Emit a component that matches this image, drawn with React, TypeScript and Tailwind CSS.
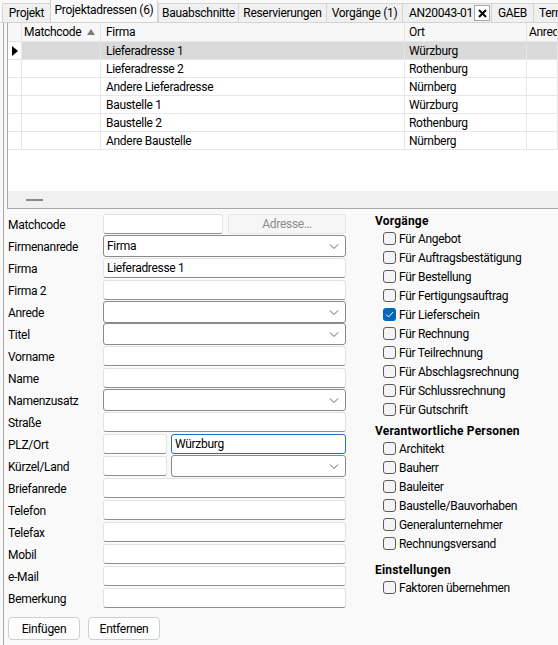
import React from 'react';

type Tab = { label: string; w: string; active?: boolean; closable?: boolean };

const tabs: Tab[] = [
  { label: 'Projekt', w: 'w-[48px]' },
  { label: 'Projektadressen (6)', w: 'w-[108px]', active: true },
  { label: 'Bauabschnitte', w: 'w-[80px]' },
  { label: 'Reservierungen', w: 'w-[88px]' },
  { label: 'Vorgänge (1)', w: 'w-[76px]' },
  { label: 'AN20043-01', w: 'w-[89px]', closable: true },
  { label: 'GAEB', w: 'w-[42px]' },
  { label: 'Termine', w: 'w-[60px]' },
];

const rows = [
  { firma: 'Lieferadresse 1', ort: 'Würzburg' },
  { firma: 'Lieferadresse 2', ort: 'Rothenburg' },
  { firma: 'Andere Lieferadresse', ort: 'Nürnberg' },
  { firma: 'Baustelle 1', ort: 'Würzburg' },
  { firma: 'Baustelle 2', ort: 'Rothenburg' },
  { firma: 'Andere Baustelle', ort: 'Nürnberg' },
];

const vorgaenge = [
  'Für Angebot',
  'Für Auftragsbestätigung',
  'Für Bestellung',
  'Für Fertigungsauftrag',
  'Für Lieferschein',
  'Für Rechnung',
  'Für Teilrechnung',
  'Für Abschlagsrechnung',
  'Für Schlussrechnung',
  'Für Gutschrift',
];

const personen = [
  'Architekt',
  'Bauherr',
  'Bauleiter',
  'Baustelle/Bauvorhaben',
  'Generalunternehmer',
  'Rechnungsversand',
];

function TabBar() {
  return (
    <div className="flex h-[23px] items-end overflow-hidden border-b border-[#d4d4d4] pl-[2px] whitespace-nowrap">
      {tabs.map((t, i) => {
        if (t.active) {
          return (
            <div
              key={t.label}
              className={`${t.w} h-[23px] flex shrink-0 items-center justify-center border-x border-t border-[#d4d4d4] bg-[#f9f9f9] pb-[2px]`}
            >
              {t.label}
            </div>
          );
        }
        if (t.closable) {
          return (
            <div
              key={t.label}
              className={`${t.w} h-[19px] flex shrink-0 items-center border-l border-t border-[#d4d4d4] bg-[#f0f0f0] pl-[6px]`}
            >
              <span>{t.label}</span>
              <span className="ml-auto mr-[1px] flex h-[16px] w-[16px] shrink-0 items-center justify-center border border-[#a8a8a8] bg-white">
                <svg width="9" height="9" viewBox="0 0 9 9">
                  <path d="M1 1 L8 8 M8 1 L1 8" stroke="#000" strokeWidth="2" />
                </svg>
              </span>
            </div>
          );
        }
        const last = i === tabs.length - 1;
        return (
          <div
            key={t.label}
            className={`${t.w} h-[19px] flex shrink-0 items-center border-l border-t border-[#d4d4d4] bg-[#f0f0f0] ${
              last ? 'justify-start pl-[5px]' : 'justify-center'
            }`}
          >
            {t.label}
          </div>
        );
      })}
    </div>
  );
}

function Grid() {
  const cell = 'border-r border-b border-[#e6e6e6] flex items-center';
  return (
    <div className="ml-[3px] h-[186px] flex flex-col border-l border-b border-[#a8a8a8] bg-white">
      {/* Kopfzeile */}
      <div className="grid h-[19px] grid-cols-[14px_79px_304px_122px_1fr] bg-[#f7f7f7]">
        <div className={cell} />
        <div className={`${cell} justify-between pl-[2px] pr-[5px]`}>
          <span>Matchcode</span>
          <svg width="8" height="6" viewBox="0 0 8 6">
            <path d="M4 0 L8 6 L0 6 Z" fill="#7a7a7a" />
          </svg>
        </div>
        <div className={`${cell} pl-[5px]`}>Firma</div>
        <div className={`${cell} pl-[4px]`}>Ort</div>
        <div className={`${cell} pl-[2px] overflow-hidden whitespace-nowrap`}>Anrede</div>
      </div>
      {rows.map((r, i) => {
        const sel = i === 0 ? 'bg-[#dadada]' : '';
        return (
          <div key={r.firma} className="grid h-[18px] grid-cols-[14px_79px_304px_122px_1fr]">
            <div className={`${cell} pl-[4px]`}>
              {i === 0 && (
                <svg width="6" height="10" viewBox="0 0 6 10">
                  <path d="M0 0 L6 5 L0 10 Z" fill="#000" />
                </svg>
              )}
            </div>
            <div className={`${cell} ${sel}`} />
            <div className={`${cell} ${sel} pl-[5px]`}>{r.firma}</div>
            <div className={`${cell} ${sel} pl-[4px]`}>{r.ort}</div>
            <div className={`${cell} ${sel}`} />
          </div>
        );
      })}
      <div className="flex-1" />
      <div className="h-[17px] flex items-center bg-[#f0f0f0] pl-[18px]">
        <div className="h-[2px] w-[17px] bg-[#8a8a8a]" />
      </div>
    </div>
  );
}

function Chevron() {
  return (
    <svg width="10" height="6" viewBox="0 0 10 6" className="absolute right-[6px] top-[8px]">
      <path d="M1 0.5 L5 4.5 L9 0.5" stroke="#5f5f5f" strokeWidth="1" fill="none" />
    </svg>
  );
}

function TextBox({ value, w = 'w-[243px]', focused }: { value?: string; w?: string; focused?: boolean }) {
  return (
    <div
      className={`${w} h-[20px] flex items-center rounded-[3px] bg-white pl-[3px] border ${
        focused ? 'border-[#1a6fc9]' : 'border-[#e2e2e2] border-b-[#8f8f8f]'
      }`}
    >
      {value}
    </div>
  );
}

function Combo({ value, w = 'w-[243px]' }: { value?: string; w?: string }) {
  return (
    <div className={`${w} relative h-[22px] flex items-center rounded-[3px] border border-[#8a8a8a] bg-white pl-[3px]`}>
      {value}
      <Chevron />
    </div>
  );
}

function Row({ label, children }: { label: string; children?: React.ReactNode }) {
  return (
    <div className="flex h-[22px] items-center">
      <div className="w-[95px] pt-[1px]">{label}</div>
      <div className="flex items-center gap-[4px]">{children}</div>
    </div>
  );
}

function Check({ label, checked }: { label: string; checked?: boolean }) {
  return (
    <div className="flex h-[19px] items-center pl-[8px]">
      {checked ? (
        <div className="flex h-[13px] w-[13px] items-center justify-center rounded-[3px] bg-[#0067c0]">
          <svg width="9" height="7" viewBox="0 0 9 7">
            <path d="M1 3.5 L3.5 6 L8 1" stroke="#fff" strokeWidth="1" fill="none" />
          </svg>
        </div>
      ) : (
        <div className="h-[13px] w-[13px] rounded-[3px] border border-[#5c5c5c] bg-[#f4f4f4]" />
      )}
      <span className="ml-[3px]">{label}</span>
    </div>
  );
}

function Heading({ children, className = '' }: { children: React.ReactNode; className?: string }) {
  return <div className={`h-[16px] flex items-center font-bold tracking-[0.2px] ${className}`}>{children}</div>;
}

export default function App() {
  return (
    <div className="w-[558px] h-[645px] overflow-hidden bg-[#f9f9f9] text-[12px] leading-none tracking-[-0.3px] text-black font-['Segoe_UI','Roboto',sans-serif]">
      <TabBar />
      <div className="ml-[3px] h-[622px] border-l border-[#a8a8a8]">
        <Grid />

        <div className="flex pt-[4px]">
          {/* Adressfelder */}
          <div className="pl-[4px]">
            <Row label="Matchcode">
              <TextBox w="w-[120px]" />
              <div className="ml-[1px] w-[118px] h-[20px] flex items-center justify-center rounded-[3px] border border-[#e6e6e6] bg-[#f6f6f6] text-[#8c8c8c]">
                Adresse…
              </div>
            </Row>
            <Row label="Firmenanrede">
              <Combo value="Firma" />
            </Row>
            <Row label="Firma">
              <TextBox value="Lieferadresse 1" />
            </Row>
            <Row label="Firma 2">
              <TextBox />
            </Row>
            <Row label="Anrede">
              <Combo />
            </Row>
            <Row label="Titel">
              <Combo />
            </Row>
            <Row label="Vorname">
              <TextBox />
            </Row>
            <Row label="Name">
              <TextBox />
            </Row>
            <Row label="Namenzusatz">
              <Combo />
            </Row>
            <Row label="Straße">
              <TextBox />
            </Row>
            <Row label="PLZ/Ort">
              <TextBox w="w-[64px]" />
              <TextBox w="w-[175px]" value="Würzburg" focused />
            </Row>
            <Row label="Kürzel/Land">
              <TextBox w="w-[64px]" />
              <Combo w="w-[175px]" />
            </Row>
            <Row label="Briefanrede">
              <TextBox />
            </Row>
            <Row label="Telefon">
              <TextBox />
            </Row>
            <Row label="Telefax">
              <TextBox />
            </Row>
            <Row label="Mobil">
              <TextBox />
            </Row>
            <Row label="e-Mail">
              <TextBox />
            </Row>
            <Row label="Bemerkung">
              <TextBox />
            </Row>

            <div className="mt-[8px] flex gap-[8px]">
              <button className="w-[72px] h-[23px] rounded-[4px] border border-[#d0d0d0] bg-[#fdfdfd]">Einfügen</button>
              <button className="w-[72px] h-[23px] rounded-[4px] border border-[#d0d0d0] bg-[#fdfdfd]">Entfernen</button>
            </div>
          </div>

          {/* Zuordnungen */}
          <div className="ml-[29px] whitespace-nowrap">
            <Heading>Vorgänge</Heading>
            {vorgaenge.map((v) => (
              <Check key={v} label={v} checked={v === 'Für Lieferschein'} />
            ))}
            <Heading className="mt-[4px]">Verantwortliche Personen</Heading>
            {personen.map((p) => (
              <Check key={p} label={p} />
            ))}
            <Heading className="mt-[9px]">Einstellungen</Heading>
            <Check label="Faktoren übernehmen" />
          </div>
        </div>
      </div>
    </div>
  );
}
